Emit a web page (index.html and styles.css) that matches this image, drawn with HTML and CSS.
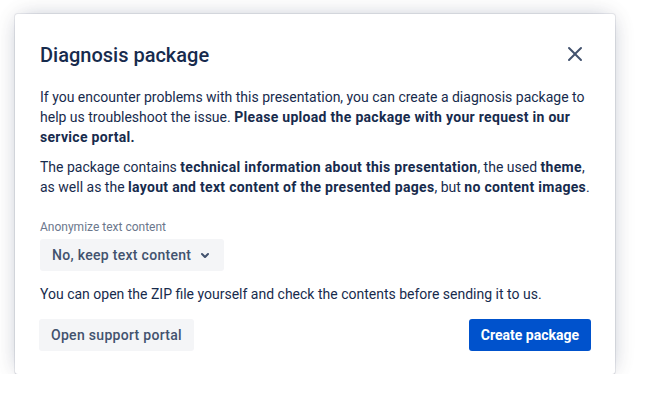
FILE: index.html
```html
<!DOCTYPE html>
<html lang="en">
<head>
    <meta charset="UTF-8">
    <meta name="viewport" content="width=device-width, initial-scale=1.0">
    <title>Diagnosis package</title>
    <link rel="stylesheet" href="styles.css">
</head>
<body>
    <div class="dialog">
        <div class="dialog-header">
            <h1 class="dialog-title">Diagnosis package</h1>
            <button class="close-btn" aria-label="Close">
                <svg width="24" height="24" viewBox="0 0 24 24"><path fill="currentColor" d="M12 10.586L6.707 5.293a1 1 0 00-1.414 1.414L10.586 12l-5.293 5.293a1 1 0 001.414 1.414L12 13.414l5.293 5.293a1 1 0 001.414-1.414L13.414 12l5.293-5.293a1 1 0 10-1.414-1.414L12 10.586z"/></svg>
            </button>
        </div>
        <div class="dialog-body">
            <p>If you encounter problems with this presentation, you can create a diagnosis package to help us troubleshoot the issue. <b>Please upload the package with your request in our service portal.</b></p>
            <p>The package contains <b>technical information about this presentation</b>, the used <b>theme</b>, as well as the <b>layout and text content of the presented pages</b>, but <b>no content images</b>.</p>
            <div class="field">
                <label class="field-label">Anonymize text content</label>
                <button class="select-btn">
                    <span>No, keep text content</span>
                    <svg width="24" height="24" viewBox="0 0 24 24"><path fill="currentColor" d="M8.292 10.293a1.009 1.009 0 000 1.419l2.939 2.965c.218.215.5.322.779.322s.556-.107.769-.322l2.93-2.955a1.01 1.01 0 000-1.419.987.987 0 00-1.406 0l-2.298 2.317-2.307-2.327a.99.99 0 00-1.406 0z"/></svg>
                </button>
            </div>
            <p class="hint">You can open the ZIP file yourself and check the contents before sending it to us.</p>
        </div>
        <div class="dialog-footer">
            <button class="btn">Open support portal</button>
            <button class="btn btn-primary">Create package</button>
        </div>
    </div>
</body>
</html>
```
FILE: styles.css
```css
body{
    margin: 0;
    background: #fff;
    font-family: Roboto, "Liberation Sans", Arial, sans-serif;
    font-size: 14px;
    line-height: 20px;
    color: #172B4D;
}
.dialog{
    margin: 14px 0 0 15px;
    width: 600px;
    box-sizing: border-box;
    border-radius: 3px;
    background: #fff;
    box-shadow: 0 0 0 1px rgba(9,30,66,0.08), 0 2px 1px rgba(9,30,66,0.08), 0 0 20px -6px rgba(9,30,66,0.31), 0 0 28px rgba(9,30,66,0.05);
}
.dialog-header{
    display: flex;
    justify-content: space-between;
    align-items: center;
    padding: 26px 28px 17px 25px;
}
.dialog-title{
    margin: 0;
    font-size: 20px;
    line-height: 30px;
    font-weight: 500;
    color: #172B4D;
}
.close-btn{
    display: flex;
    width: 24px;
    height: 24px;
    padding: 0;
    border: none;
    background: none;
    color: #42526E;
    cursor: pointer;
    margin-top: -2px;
}
.dialog-body{
    padding: 0 24px 0 25px;
}
.dialog-body p{
    margin: 0 0 10px;
}
.dialog-body b{
    font-weight: 700;
    letter-spacing: 0.3px;
}
.field{
    display: flex;
    flex-direction: column;
    align-items: flex-start;
    margin-top: 22px;
}
.field-label{
    font-size: 12px;
    line-height: 16px;
    color: #6B778C;
    margin-bottom: 4px;
}
.select-btn{
    display: flex;
    align-items: center;
    gap: 2px;
    height: 32px;
    padding: 0 7px 0 12px;
    border: none;
    border-radius: 3px;
    background: #F4F5F7;
    color: #42526E;
    font: inherit;
    font-weight: 500;
    letter-spacing: 0.3px;
    cursor: pointer;
}
.dialog-body p.hint{
    margin: 13px 0 0;
}
.dialog-footer{
    display: flex;
    justify-content: space-between;
    padding: 15px 24px 23px 24px;
}
.btn{
    height: 32px;
    padding: 0 12px;
    border: none;
    border-radius: 3px;
    background: #F4F5F7;
    color: #42526E;
    font: inherit;
    font-weight: 500;
    letter-spacing: 0.3px;
    cursor: pointer;
}
.btn-primary{
    background: #0052CC;
    color: #fff;
    font-weight: 700;
    letter-spacing: 0;
}
```
